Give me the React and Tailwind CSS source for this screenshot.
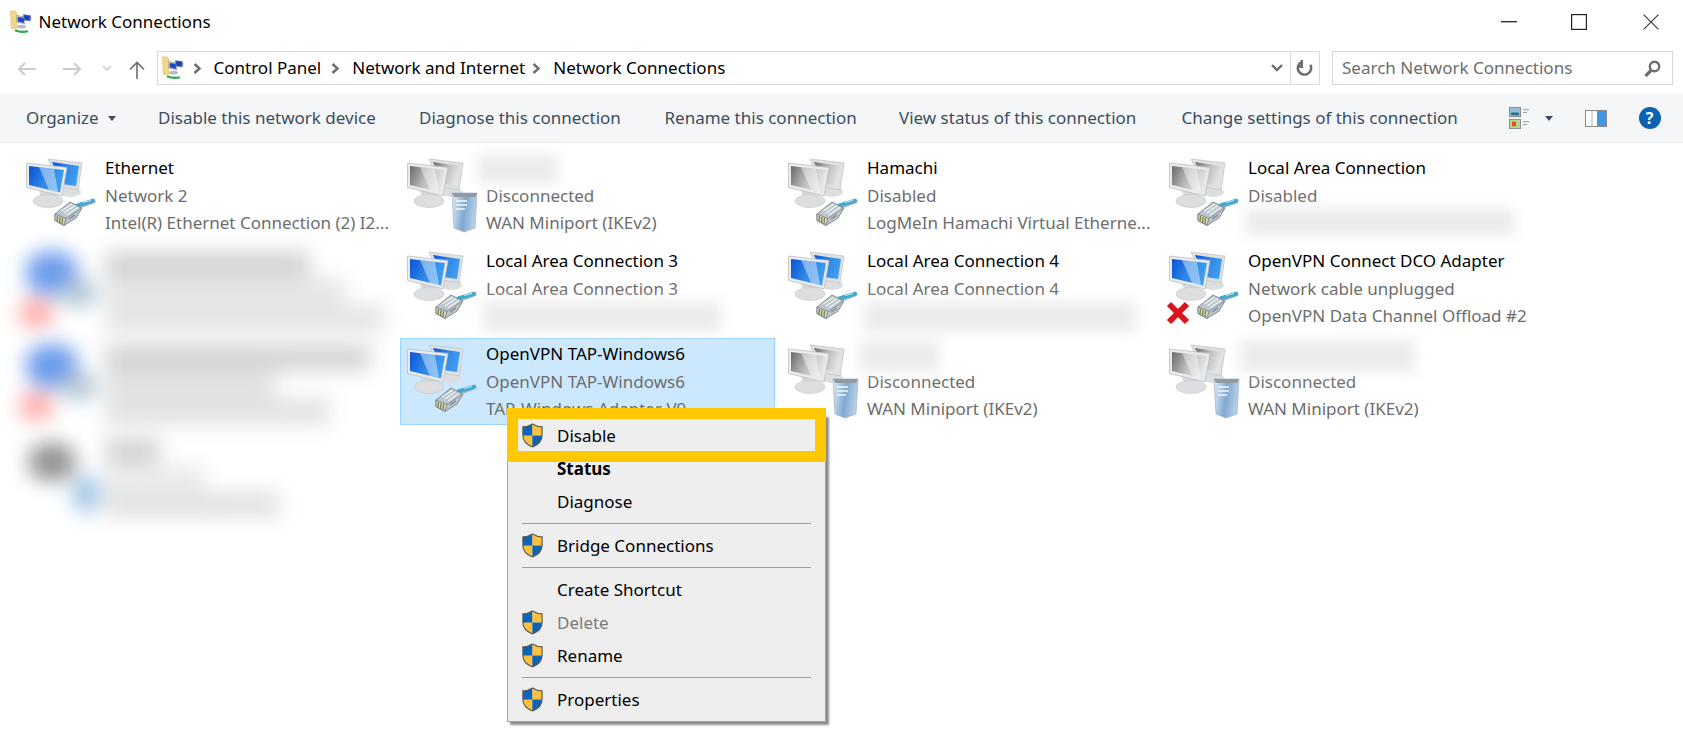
import React from "react";

function Plug() {
  return (
    <g>
      <path d="M50 49 L60 46 L68 43" fill="none" stroke="#8fb3c4" strokeWidth="5" strokeLinecap="round" />
      <path d="M53 47 L60 45 L68 43" fill="none" stroke="#3fa9d2" strokeWidth="3.4" strokeLinecap="round" />
      <path d="M58 44.5 L66 42.5" fill="none" stroke="#c9ecf7" strokeWidth="1" />
      <polygon points="30,56 45,44 57,50 51,60 39,67.5 30,62.5" fill="#bcc6cb" stroke="#78858d" strokeWidth="0.9" />
      <polygon points="30,56 41,60.5 39,67.5 30,62.5" fill="#d3d8c0" stroke="#6d7a82" strokeWidth="0.8" />
      <path d="M32.5 58 L32 63.5 M35 59 L34.5 65 M37.5 60 L37 66" stroke="#7d7a45" strokeWidth="1.2" />
      <path d="M36 53 L47 46 M39 55 L50 47.5 M42 57 L53 49.5" stroke="#eef3f5" strokeWidth="1.3" />
      <path d="M41 60.5 L56 50.5" stroke="#78858d" strokeWidth="0.8" />
      <path d="M44 61 L50 57" stroke="#8a979f" strokeWidth="1.6" />
    </g>
  );
}

function NetIcon({ gray = false, adorn = "plug", id }) {
  const a = gray ? "#6a6a6a" : "#0a52d6";
  const m = gray ? "#bdbdbd" : "#2f86e6";
  const b = gray ? "#e4e4e4" : "#3f9cf0";
  return (
    <svg width="70" height="74" viewBox="0 0 70 74" className="shrink-0 overflow-visible">
      <defs>
        <linearGradient id={`s${id}`} x1="0" y1="0" x2="1" y2="0.35">
          <stop offset="0" stopColor={a} />
          <stop offset="0.55" stopColor={m} />
          <stop offset="1" stopColor={b} />
        </linearGradient>
        <linearGradient id={`v${id}`} x1="0" y1="0" x2="1" y2="0.2">
          <stop offset="0" stopColor="#e4edf6" />
          <stop offset="0.55" stopColor="#7fa9cf" />
          <stop offset="1" stopColor="#b7d0e8" />
        </linearGradient>
      </defs>
      <ellipse cx="45" cy="34" rx="11" ry="5" fill="#dcdee0" />
      <polygon points="23,1 57,5 53,32 36,29" fill="#dee1e4" stroke="#c2c6ca" strokeWidth="0.8" />
      <polygon points="27,4 54,8 51,28 37,26" fill={`url(#s${id})`} />
      <polygon points="14,32 29,35 30,42 16,40" fill="#d6d9db" />
      <ellipse cx="23" cy="43" rx="15" ry="6.5" fill="#dcdee0" stroke="#c8cacc" strokeWidth="0.7" />
      <polygon points="1.5,5 42,9.5 37,38 1.5,29.5" fill="#e9ebed" stroke="#bcbfc2" strokeWidth="0.8" />
      <polygon points="4,8 39,12 35,34.5 4,27" fill={`url(#s${id})`} />
      <polygon points="14,9 29,11 33,34 24,32" fill="#ffffff" opacity="0.42" />
      {adorn === "plug" && <Plug />}
      {adorn === "x" && (
        <>
          <Plug />
          <path d="M1 53 L19 71 M19 53 L1 71" stroke="#d8141c" strokeWidth="6" />
        </>
      )}
      {adorn === "server" && (
        <g>
          <polygon points="46,35 71,35 69,70 58,74 48,70" fill={`url(#v${id})`} stroke="#9db2c5" strokeWidth="0.7" />
          <polygon points="46,35 71,35 69,39 48,39" fill="#8f9aa3" />
          <path d="M50 43h11M50 47h11M50 51h9" stroke="#f2f7fb" strokeWidth="1.3" />
        </g>
      )}
    </svg>
  );
}

function Shield() {
  return (
    <svg width="23" height="25" viewBox="0 0 24 26" className="shrink-0">
      <path d="M12 1 C8 3.5 5 4 2 4 V13 C2 19 7 23 12 25 Z" fill="#0d63b8" />
      <path d="M12 1 C16 3.5 19 4 22 4 V13 H12 Z" fill="#fdc13c" />
      <path d="M2 13 H12 V25 C7 23 2 19 2 13 Z" fill="#fdc13c" />
      <path d="M12 13 H22 C22 19 17 23 12 25 Z" fill="#0d63b8" />
      <path d="M12 1 C8 3.5 5 4 2 4 V13 C2 19 7 23 12 25 C17 23 22 19 22 13 V4 C19 4 16 3.5 12 1 Z" fill="none" stroke="#5c5a4e" strokeWidth="1.2" />
    </svg>
  );
}

function SmallFolderNet() {
  return (
    <svg width="22" height="24" viewBox="0 0 23 26" className="shrink-0">
      <path d="M0 1 H5 L7 3 V20 H1 Z" fill="#f0d78c" stroke="#d9bb66" strokeWidth="0.6" />
      <polygon points="7,6 16,7.5 15.5,15 7,13" fill="#dfe3e8" stroke="#6a7480" strokeWidth="0.6" />
      <polygon points="8,7.5 15,8.5 14.5,14 8,12.5" fill="#1d48c8" />
      <polygon points="14,5 22,6 21.5,12 15,11" fill="#1a3fae" stroke="#8d96a0" strokeWidth="0.6" />
      <rect x="20" y="8" width="2.5" height="2.5" fill="#4d6fd0" />
      <ellipse cx="12" cy="18" rx="5" ry="2" fill="#b7bdc4" />
      <path d="M5 22 Q12 25 19 23" stroke="#27a84a" strokeWidth="2.4" fill="none" />
    </svg>
  );
}

const Chev = ({ className }) => (
  <svg width="9" height="11" viewBox="0 0 9 11" className={className}>
    <path d="M1.5 1 L6.5 5.5 L1.5 10" fill="none" stroke="#6d6d6d" strokeWidth="2.4" />
  </svg>
);

const Caret = ({ color = "#3c4d60" }) => (
  <svg width="8" height="5" viewBox="0 0 8 5"><path d="M0 0 H8 L4 5 Z" fill={color} /></svg>
);

function Blur({ w, h = "h-[26px]" }) {
  return <div className={`${w} ${h} bg-[#ebebeb] blur-[7px]`} />;
}

function Item({ icon, title, sub, desc, titleBlur, descBlur, selected }) {
  return (
    <div
      className={`h-[87px] flex pl-[5px] pt-[5px] border ${
        selected ? "bg-[#cce8ff] border-[#99d1ff]" : "border-transparent"
      }`}
    >
      {icon}
      <div className="ml-[10px] -mt-[4px] leading-[27.5px] text-[#6d6d6d] whitespace-nowrap min-w-0">
        {title ? <div className="text-black h-[27.5px]">{title}</div> : <div className="h-[27.5px] -ml-[8px]">{titleBlur}</div>}
        <div className="h-[27.5px]">{sub}</div>
        {desc ? <div className="h-[27.5px]">{desc}</div> : <div className="h-[27.5px] -ml-[3px]">{descBlur}</div>}
      </div>
    </div>
  );
}

function HazeItem({ gray, lines }) {
  return (
    <div className="h-[87px] flex pl-[6px] pt-[4px] blur-[10px] overflow-visible">
      <div className="relative w-[80px] h-[80px] shrink-0">
        {gray ? (
          <>
            <div className="absolute left-[3px] top-[8px] w-[48px] h-[38px] rounded-full bg-[#949494]" />
            <div className="absolute left-[47px] top-[40px] w-[28px] h-[38px] rounded-full bg-[#a3c6e6]" />
          </>
        ) : (
          <>
            <div className="absolute left-[1px] top-[2px] w-[52px] h-[44px] rounded-[45%] bg-[#6a9aec]" />
            <div className="absolute left-[34px] top-[30px] w-[38px] h-[28px] rounded-full bg-[#b4c6d4]" />
            <div className="absolute left-[-6px] top-[50px] w-[34px] h-[28px] rounded-full bg-[#ffa8a8]" />
          </>
        )}
      </div>
      <div className="flex flex-col pt-[2px]">
        {lines.map((l, i) => (
          <div key={i} className={`${l[0]} ${l[1]} h-[27px]`} />
        ))}
      </div>
    </div>
  );
}

function MenuItem({ shield, children, className = "text-black" }) {
  return (
    <div className={`h-[33px] flex items-center ${className}`}>
      <div className="w-[49px] pl-[13px] flex items-center">{shield && <Shield />}</div>
      <span>{children}</span>
    </div>
  );
}

const Sep = () => (
  <div className="h-[11px] flex items-center pl-[14px] pr-[14px]">
    <div className="h-px w-full bg-[#a0a0a0]" />
  </div>
);

export default function App() {
  return (
    <div
      className="relative w-[1683px] h-[754px] bg-white overflow-hidden text-[17px] text-black"
      style={{ fontFamily: '"Noto Sans", "Open Sans", sans-serif' }}
    >
      {/* Title bar */}
      <div className="h-[44px] flex items-center pl-[10px]">
        <SmallFolderNet />
        <span className="ml-[6.5px]">Network Connections</span>
        <div className="ml-auto flex items-center">
          <svg width="16" height="2" viewBox="0 0 16 2" className="mr-[54px]"><rect width="16" height="1.4" fill="#333" /></svg>
          <svg width="16" height="16" viewBox="0 0 16 16" className="mr-[56px]"><rect x="0.6" y="0.6" width="14.8" height="14.8" fill="none" stroke="#222" strokeWidth="1.2" /></svg>
          <svg width="16" height="16" viewBox="0 0 16 16" className="mr-[24px]"><path d="M0.6 0.6 L15.4 15.4 M15.4 0.6 L0.6 15.4" stroke="#333" strokeWidth="1.1" /></svg>
        </div>
      </div>

      {/* Address row */}
      <div className="h-[50px] flex items-start pt-[7px] pl-[17px]">
        <svg width="19" height="14" viewBox="0 0 19 14" className="mt-[11px]"><path d="M19 7 H2 M8 1 L2 7 L8 13" fill="none" stroke="#c9cccf" strokeWidth="2" /></svg>
        <svg width="19" height="14" viewBox="0 0 19 14" className="mt-[11px] ml-[26.5px]"><path d="M0 7 H17 M11 1 L17 7 L11 13" fill="none" stroke="#c9cccf" strokeWidth="2" /></svg>
        <svg width="10" height="6" viewBox="0 0 10 6" className="mt-[14px] ml-[20.5px]"><path d="M1 1 L5 5 L9 1" fill="none" stroke="#c9cccf" strokeWidth="1.6" /></svg>
        <svg width="16" height="18" viewBox="0 0 16 18" className="mt-[10px] ml-[17px]"><path d="M8 18 V1.5 M1 8.5 L8 1.5 L15 8.5" fill="none" stroke="#6d6d6d" strokeWidth="1.6" /></svg>
        <div className="ml-[12px] w-[1163px] h-[34px] border border-[#d9d9d9] flex items-center pl-[3.5px]">
          <SmallFolderNet />
          <Chev className="ml-[9px]" />
          <span className="ml-[12px]">Control Panel</span>
          <Chev className="ml-[10px]" />
          <span className="ml-[12px]">Network and Internet</span>
          <Chev className="ml-[7px]" />
          <span className="ml-[12px]">Network Connections</span>
          <svg width="12" height="8" viewBox="0 0 12 8" className="ml-auto mr-[7px]"><path d="M1 1 L6 6 L11 1" fill="none" stroke="#6d6d6d" strokeWidth="2.4" /></svg>
          <div className="w-[29.5px] h-full border-l border-[#d9d9d9] flex items-center justify-center">
            <svg width="17" height="19" viewBox="0 0 17 19"><path d="M5 2 A7 7 0 1 0 14 5 M5 0 V7 H0" fill="none" stroke="#6d6d6d" strokeWidth="2.6" transform="translate(1,1) scale(0.95)" /></svg>
          </div>
        </div>
        <div className="ml-[12px] w-[341px] h-[34px] border border-[#d9d9d9] flex items-center pl-[9px] pr-[11px] text-[#6d6d6d]">
          <span>Search Network Connections</span>
          <svg width="17" height="17" viewBox="0 0 17 17" className="ml-auto"><circle cx="10.5" cy="6.5" r="4.7" fill="none" stroke="#6d6d6d" strokeWidth="2.4" /><path d="M7 10.5 L1.5 16" stroke="#6d6d6d" strokeWidth="3.2" /></svg>
        </div>
      </div>

      {/* Toolbar */}
      <div className="h-[49px] bg-[#f5f6f7] border-b border-[#e8eaec] flex items-center pl-[26px] text-[#3c4d60] whitespace-nowrap">
        <div className="w-[132px] flex items-center gap-[9px]">Organize <Caret /></div>
        <div className="w-[261px]">Disable this network device</div>
        <div className="w-[245.5px]">Diagnose this connection</div>
        <div className="w-[234.5px]">Rename this connection</div>
        <div className="w-[282.5px]">View status of this connection</div>
        <div className="w-[327px]">Change settings of this connection</div>
        <svg width="21" height="22" viewBox="0 0 21 24" preserveAspectRatio="none">
          <rect x="0.5" y="0.5" width="11" height="10" fill="#8fc0d8" stroke="#8a8a8a" />
          <rect x="2" y="6" width="8" height="3" fill="#2f6f8f" />
          <rect x="0.5" y="13.5" width="11" height="10" fill="#b9d68a" stroke="#8a8a8a" />
          <rect x="3" y="16" width="4" height="5" fill="#d9522b" />
          <path d="M14 3h6M14 6h4M14 16h6M14 19h4" stroke="#9a9a9a" strokeWidth="1" />
        </svg>
        <div className="ml-[15px]"><Caret /></div>
        <svg width="22" height="17" viewBox="0 0 22 17" className="ml-[32px]">
          <rect x="0.5" y="0.5" width="21" height="16" fill="#fff" stroke="#8a8a8a" />
          <rect x="12" y="1" width="9" height="15" fill="#3f95e6" />
          <path d="M7 1v15" stroke="#b0b0b0" />
        </svg>
        <div className="ml-[32px] w-[22px] h-[22px] rounded-full bg-[#0b62b5] text-white flex items-center justify-center text-[16px] font-bold leading-none">?</div>
      </div>

      {/* Items */}
      <div className="grid grid-cols-[repeat(4,375px)] auto-rows-[87px] gap-[6px] pl-[19px] pt-[9px]">
        <Item icon={<NetIcon id="a" />} title="Ethernet" sub="Network 2" desc="Intel(R) Ethernet Connection (2) I2..." />
        <Item icon={<NetIcon id="b" gray adorn="server" />} titleBlur={<Blur w="w-[80px]" h="h-[30px]" />} sub="Disconnected" desc="WAN Miniport (IKEv2)" />
        <Item icon={<NetIcon id="c" gray />} title="Hamachi" sub="Disabled" desc="LogMeIn Hamachi Virtual Etherne..." />
        <Item icon={<NetIcon id="d" gray />} title="Local Area Connection" sub="Disabled" descBlur={<Blur w="w-[270px]" />} />

        <HazeItem lines={[["w-[205px]", "bg-[#d4d4d4]"], ["w-[240px]", "bg-[#e6e6e6]"], ["w-[280px]", "bg-[#e4e4e4]"]]} />
        <Item icon={<NetIcon id="e" />} title="Local Area Connection 3" sub="Local Area Connection 3" descBlur={<Blur w="w-[238px]" h="h-[30px]" />} />
        <Item icon={<NetIcon id="f" />} title="Local Area Connection 4" sub="Local Area Connection 4" descBlur={<Blur w="w-[272px]" h="h-[30px]" />} />
        <Item icon={<NetIcon id="g" adorn="x" />} title="OpenVPN Connect DCO Adapter" sub="Network cable unplugged" desc="OpenVPN Data Channel Offload #2" />

        <HazeItem lines={[["w-[265px]", "bg-[#d4d4d4]"], ["w-[170px]", "bg-[#e2e2e2]"], ["w-[225px]", "bg-[#e2e2e2]"]]} />
        <Item selected icon={<NetIcon id="h" />} title="OpenVPN TAP-Windows6" sub="OpenVPN TAP-Windows6" desc="TAP-Windows Adapter V9" />
        <Item icon={<NetIcon id="i" gray adorn="server" />} titleBlur={<Blur w="w-[80px]" h="h-[32px]" />} sub="Disconnected" desc="WAN Miniport (IKEv2)" />
        <Item icon={<NetIcon id="j" gray adorn="server" />} titleBlur={<Blur w="w-[175px]" h="h-[32px]" />} sub="Disconnected" desc="WAN Miniport (IKEv2)" />

        <HazeItem gray lines={[["w-[55px]", "bg-[#d4d4d4]"], ["w-[100px]", "bg-[#ececec]"], ["w-[175px]", "bg-[#e2e2e2]"]]} />
      </div>

      {/* Context menu */}
      <div className="absolute left-[507px] top-[414px] w-[319px] pt-[4px] pb-[5px] bg-[#eeeeee] border border-[#a0a0a0] shadow-[3px_3px_2px_rgba(0,0,0,0.45)]">
        <MenuItem shield>Disable</MenuItem>
        <MenuItem className="font-bold text-black">Status</MenuItem>
        <MenuItem>Diagnose</MenuItem>
        <Sep />
        <MenuItem shield>Bridge Connections</MenuItem>
        <Sep />
        <MenuItem>Create Shortcut</MenuItem>
        <MenuItem shield className="text-[#7a7a7a]">Delete</MenuItem>
        <MenuItem shield>Rename</MenuItem>
        <Sep />
        <MenuItem shield>Properties</MenuItem>
      </div>
      <div className="absolute left-[507px] top-[408px] w-[319px] h-[54px] border-[11.5px] border-[#ffc800] pointer-events-none" />
    </div>
  );
}
